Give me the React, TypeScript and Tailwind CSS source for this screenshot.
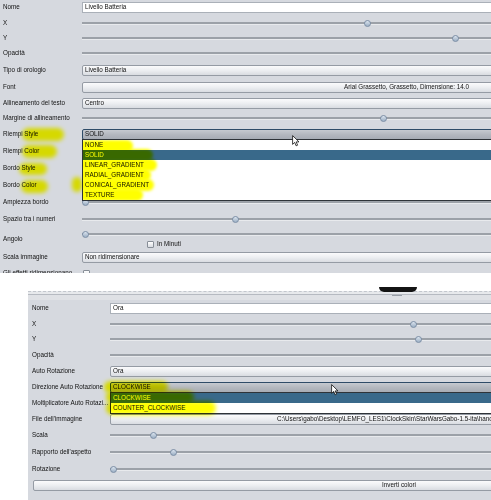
import React from 'react';

type RowProps = { label: string; h: string; pad?: string; children?: React.ReactNode };

const Row = ({ label, h, pad = 'pl-[3px]', children }: RowProps) => (
  <div className={`flex items-center ${h}`}>
    <div className={`w-[82px] shrink-0 whitespace-nowrap ${pad}`}>{label}</div>
    <div className="w-[660px] shrink-0">{children}</div>
  </div>
);

const TextField = ({ value }: { value: string }) => (
  <div className="h-[11px] bg-white border border-[#aab0b8] flex items-center pl-[2px]">{value}</div>
);

const Combo = ({ value, active = false }: { value: string; active?: boolean }) => (
  <div
    className={
      active
        ? 'h-[11px] rounded-[2px] border border-[#2f4c68] bg-gradient-to-b from-[#c6cad0] via-[#b4b8bf] to-[#a7acb4] flex items-center pl-[2px]'
        : 'h-[11px] rounded-[2px] border border-[#959ba4] bg-gradient-to-b from-[#fbfbfc] via-[#eceef1] to-[#d9dce1] flex items-center pl-[2px]'
    }
  >
    {value}
  </div>
);

const Btn = ({ text, pad }: { text: string; pad: string }) => (
  <div className={`h-[11px] rounded-[2px] border border-[#959ba4] bg-gradient-to-b from-[#fbfbfc] via-[#eceef1] to-[#d9dce1] flex items-center whitespace-nowrap ${pad}`}>
    {text}
  </div>
);

const Slider = ({ at }: { at: string }) => (
  <div className="relative h-[7px] flex items-center">
    <div className="h-[3px] w-full border-t-2 border-[#9ca1a8] bg-[#e8eaed]" />
    <div className={`absolute top-0 ${at} w-[7px] h-[7px] rounded-full border border-[#7b8ea6] bg-gradient-to-b from-[#dbe4ee] to-[#9db0c5]`} />
  </div>
);

const Check = () => (
  <div className="w-[7px] h-[7px] rounded-[1px] border border-[#878e97] bg-gradient-to-b from-white to-[#d9dce1]" />
);

const Cursor = ({ pos }: { pos: string }) => (
  <svg className={`absolute ${pos}`} width="8" height="12" viewBox="0 0 8 12">
    <path d="M0.6 0.6 L0.6 9.4 L2.7 7.4 L4.1 10.8 L5.6 10.2 L4.2 6.9 L7 6.9 Z" fill="#fff" stroke="#111" strokeWidth="0.8" />
  </svg>
);

const fillStyles = ['NONE', 'SOLID', 'LINEAR_GRADIENT', 'RADIAL_GRADIENT', 'CONICAL_GRADIENT', 'TEXTURE'];

export default function App() {
  return (
    <div className="relative w-[491px] h-[500px] overflow-hidden bg-white text-[#111] text-[6.3px] leading-none font-['Liberation_Sans',Arial,sans-serif]">
      {/* top panel */}
      <div className="w-[760px] h-[273px] overflow-hidden bg-[#d6d9df]">
        <Row label="Nome" h="h-[15px]"><TextField value="Livello Batteria" /></Row>
        <Row label="X" h="h-[16px]"><Slider at="left-[282px]" /></Row>
        <Row label="Y" h="h-[14px]"><Slider at="left-[370px]" /></Row>
        <Row label="Opacità" h="h-[17px]"><Slider at="left-[640px]" /></Row>
        <Row label="Tipo di orologio" h="h-[17px]"><Combo value="Livello Batteria" /></Row>
        <Row label="Font" h="h-[16px]"><Btn text="Arial Grassetto, Grassetto, Dimensione: 14.0" pad="pl-[261px]" /></Row>
        <Row label="Allineamento del testo" h="h-[16px]"><Combo value="Centro" /></Row>
        <Row label="Margine di allineamento" h="h-[15px]"><Slider at="left-[298px]" /></Row>
        <Row label="Riempi Style" h="h-[17px]"><Combo value="SOLID" active /></Row>
        <Row label="Riempi Color" h="h-[17px]" />
        <Row label="Bordo Style" h="h-[17px]" />
        <Row label="Bordo Color" h="h-[17px]" />
        <Row label="Ampiezza bordo" h="h-[17px]"><Slider at="left-[0px]" /></Row>
        <Row label="Spazio tra i numeri" h="h-[17px]"><Slider at="left-[150px]" /></Row>
        <Row label="Angolo" h="h-[22px]">
          <div className="flex flex-col gap-[3px]">
            <Slider at="left-[0px]" />
            <div className="flex items-center gap-[3px] pl-[65px]">
              <Check />
              <span>In Minuti</span>
            </div>
          </div>
        </Row>
        <Row label="Scala immagine" h="h-[15px]"><Combo value="Non ridimensionare" /></Row>
        <Row label="Gli effetti ridimensionano" h="h-[16px]">
          <div className="pl-[1px]"><Check /></div>
        </Row>
      </div>

      {/* gap */}
      <div className="h-[18px]" />

      {/* bottom panel */}
      <div className="ml-[28px] w-[760px] h-[209px] bg-[#d6d9df]">
        <div className="h-[9px] flex flex-col">
          <div className="h-[3px] bg-[#e7e9ec] border-t border-dashed border-[#c3c7cd]" />
          <div className="h-px bg-[#b6bac1]" />
          <div className="flex-1 bg-[#dfe1e5]" />
        </div>
        <Row label="Nome" h="h-[16px]" pad="pl-[4px]"><TextField value="Ora" /></Row>
        <Row label="X" h="h-[16px]" pad="pl-[4px]"><Slider at="left-[300px]" /></Row>
        <Row label="Y" h="h-[15px]" pad="pl-[4px]"><Slider at="left-[305px]" /></Row>
        <Row label="Opacità" h="h-[16px]" pad="pl-[4px]"><Slider at="left-[640px]" /></Row>
        <Row label="Auto Rotazione" h="h-[16px]" pad="pl-[4px]"><Combo value="Ora" /></Row>
        <Row label="Direzione Auto Rotazione" h="h-[16px]" pad="pl-[4px]"><Combo value="CLOCKWISE" active /></Row>
        <Row label="Moltiplicatore Auto Rotazi..." h="h-[16px]" pad="pl-[4px]" />
        <Row label="File dell'immagine" h="h-[16px]" pad="pl-[4px]">
          <Btn text="C:\Users\gabo\Desktop\LEMFO_LES1\ClockSkin\StarWarsGabo-1.5-ita\hand-hour.png" pad="pl-[166px]" />
        </Row>
        <Row label="Scala" h="h-[17px]" pad="pl-[4px]"><Slider at="left-[40px]" /></Row>
        <Row label="Rapporto dell'aspetto" h="h-[17px]" pad="pl-[4px]"><Slider at="left-[60px]" /></Row>
        <Row label="Rotazione" h="h-[16px]" pad="pl-[4px]"><Slider at="left-[0px]" /></Row>
        <div className="h-[17px] flex items-center pl-[5px]">
          <div className="w-[718px]"><Btn text="Inverti colori" pad="pl-[348px]" /></div>
        </div>
      </div>

      {/* split handle above the second panel */}
      <div className="absolute left-[379px] top-[287px] w-[38px] h-[5px] rounded-b-[5px] bg-[#141414]" />
      <div className="absolute left-[392px] top-[295px] w-[10px] h-px bg-[#9aa0a8]" />

      {/* combo popup, top panel */}
      <div className="absolute left-[82px] top-[139px] w-[420px] bg-white border border-[#2e3338] overflow-hidden">
        {fillStyles.map((s) => (
          <div
            key={s}
            className={s === 'SOLID' ? 'h-[10px] flex items-center pl-[2px] bg-[#39698a] text-white' : 'h-[10px] flex items-center pl-[2px]'}
          >
            {s}
          </div>
        ))}
        <div className="absolute left-[-4px] top-[0px] w-[54px] h-[12px] rounded-full bg-[#ffff00] mix-blend-multiply blur-[1.5px]" />
        <div className="absolute left-[-4px] top-[9px] w-[74px] h-[12px] rounded-full bg-[#ffff00] mix-blend-multiply blur-[1.5px]" />
        <div className="absolute left-[-4px] top-[19px] w-[78px] h-[12px] rounded-full bg-[#ffff00] mix-blend-multiply blur-[1.5px]" />
        <div className="absolute left-[-4px] top-[29px] w-[72px] h-[12px] rounded-full bg-[#ffff00] mix-blend-multiply blur-[1.5px]" />
        <div className="absolute left-[-4px] top-[39px] w-[75px] h-[12px] rounded-full bg-[#ffff00] mix-blend-multiply blur-[1.5px]" />
        <div className="absolute left-[-4px] top-[49px] w-[64px] h-[12px] rounded-full bg-[#ffff00] mix-blend-multiply blur-[1.5px]" />
      </div>

      {/* combo popup, bottom panel */}
      <div className="absolute left-[110px] top-[392px] w-[400px] bg-white border border-[#2e3338]">
        <div className="h-[10px] flex items-center pl-[2px] bg-[#39698a] text-white">CLOCKWISE</div>
        <div className="h-[10px] flex items-center pl-[2px]">COUNTER_CLOCKWISE</div>
      </div>

      {/* highlighter marks */}
      <div className="absolute left-[22px] top-[128px] w-[42px] h-[13px] rounded-full bg-[#ffff00] mix-blend-multiply blur-[2px]" />
      <div className="absolute left-[22px] top-[145px] w-[35px] h-[13px] rounded-full bg-[#ffff00] mix-blend-multiply blur-[2px]" />
      <div className="absolute left-[19px] top-[163px] w-[28px] h-[12px] rounded-full bg-[#ffff00] mix-blend-multiply blur-[2px]" />
      <div className="absolute left-[21px] top-[180px] w-[27px] h-[13px] rounded-full bg-[#ffff00] mix-blend-multiply blur-[2px]" />
      <div className="absolute left-[72px] top-[177px] w-[10px] h-[15px] rounded-full bg-[#ffff00] mix-blend-multiply blur-[2px]" />
      <div className="absolute left-[104px] top-[381px] w-[64px] h-[12px] rounded-full bg-[#ffff00] mix-blend-multiply blur-[2px]" />
      <div className="absolute left-[106px] top-[391px] w-[88px] h-[12px] rounded-full bg-[#ffff00] mix-blend-multiply blur-[2px]" />
      <div className="absolute left-[106px] top-[401px] w-[110px] h-[14px] rounded-full bg-[#ffff00] mix-blend-multiply blur-[2px]" />

      <Cursor pos="left-[292px] top-[135px]" />
      <Cursor pos="left-[331px] top-[384px]" />
    </div>
  );
}
